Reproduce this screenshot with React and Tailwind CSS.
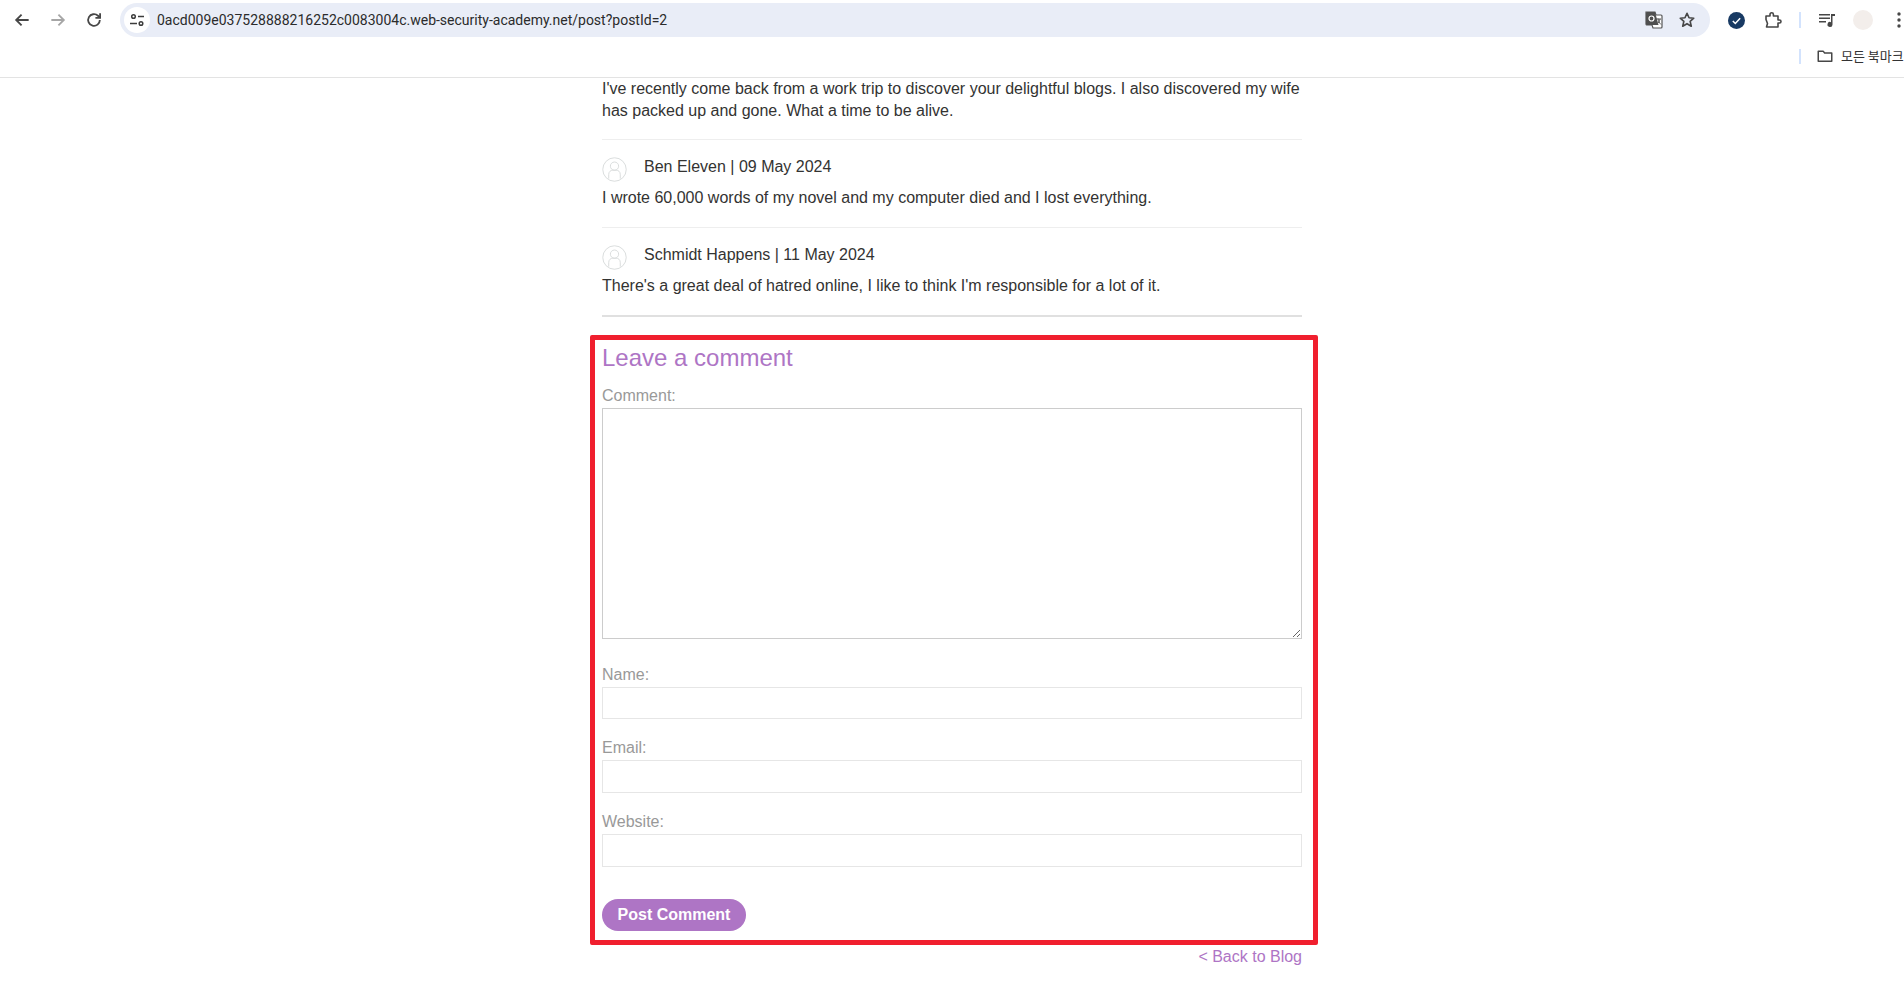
import React from "react";

function Avatar() {
  return (
    <svg width="25" height="25" viewBox="0 0 26 26" fill="none" stroke="#d9dcdc" strokeWidth="1" className="shrink-0">
      <circle cx="13" cy="13" r="12.200" />
      <circle cx="13" cy="9.500" r="4.300" />
      <path d="M7 22.500v-4.500c0-2.600 2-4.300 4.300-4.300h3.400c2.300 0 4.300 1.700 4.300 4.300v4.500" />
    </svg>
  );
}

function Comment({ author, children, last }) {
  return (
    <section className={`pt-[16px] pb-[18px] ${last ? "border-b-2 border-[#e0e0e0] -mb-[1px]" : "border-b border-[#eeeeee]"}`}>
      <div className="flex items-center h-[26px] gap-[17px]">
        <Avatar />
        <span className="-mt-[5px]">{author}</span>
      </div>
      <p className="mt-[5px] leading-[22px]">{children}</p>
    </section>
  );
}

function Field({ label, top, h }) {
  return (
    <div className={top}>
      <label className="block text-[#999999] leading-[22px] h-[22px]">{label}</label>
      <input className={`block mt-[1px] w-full ${h} border border-[#e6e6e6] bg-white outline-none`} />
    </div>
  );
}

export default function App() {
  return (
    <div className="h-[981px] overflow-hidden bg-white text-[16px] text-[#333332] font-['Liberation_Sans',Arial,sans-serif]">
      <header className="h-[78px] border-b border-[#e3e3e3] bg-white">
        <div className="flex items-center h-[40px]">
          <div className="w-[120px] shrink-0 flex items-center pl-[12px] gap-[16px]">
            <svg width="20" height="20" viewBox="0 0 24 24" fill="none" stroke="#474747" strokeWidth="2.200">
              <path d="M20 12H5M11.500 5.500 5 12l6.500 6.500" />
            </svg>
            <svg width="20" height="20" viewBox="0 0 24 24" fill="none" stroke="#a6a6a6" strokeWidth="2.200">
              <path d="M4 12h15M12.500 5.500 19 12l-6.500 6.500" />
            </svg>
            <svg width="20" height="20" viewBox="0 0 24 24" fill="none" stroke="#474747" strokeWidth="2.200">
              <path d="M19 12a7 7 0 1 1-2.200-5.100L19 9" />
              <path d="M19.300 3.800V9.400h-5.600" />
            </svg>
          </div>
          <div className="w-[1590px] h-[34px] rounded-full bg-[#e9edf7] flex items-center pl-[4px] pr-[14px]">
            <div className="w-[26px] h-[26px] rounded-full bg-white flex items-center justify-center shrink-0">
              <svg width="16" height="16" viewBox="0 0 16 16" fill="none" stroke="#3c3c3c" strokeWidth="1.500">
                <circle cx="4.500" cy="4.500" r="1.800" />
                <path d="M9 4.500h6M1 11.500h7" />
                <circle cx="12" cy="11.500" r="1.800" />
              </svg>
            </div>
            <span className="ml-[7px] text-[14px] text-[#2b2b2b] font-['Roboto',sans-serif]">
              0acd009e037528888216252c0083004c.web-security-academy.net/post?postId=2
            </span>
            <div className="ml-auto flex items-center gap-[14px]">
              <svg width="20" height="20" viewBox="0 0 20 20">
                <path d="M2 2h9l1 3h5a1 1 0 0 1 1 1v11a1 1 0 0 1-1 1H9l-1-3H3a1 1 0 0 1-1-1z" fill="#fff" stroke="#555" strokeWidth="1.200" />
                <path d="M2 3a1 1 0 0 1 1-1h8l3.500 13H3a1 1 0 0 1-1-1z" fill="#4f4f4f" />
                <circle cx="7.500" cy="8.500" r="2.500" fill="none" stroke="#fff" strokeWidth="1.200" />
                <path d="M12 9h5M14 8.500c.5 3 1.500 4.500 3 6M16 9c-.5 2.500-1.700 4-3 5" fill="none" stroke="#555" strokeWidth="1" />
              </svg>
              <svg width="18" height="18" viewBox="0 0 24 24" fill="none" stroke="#474747" strokeWidth="2.200" strokeLinejoin="round">
                <path d="m12 3 2.700 6 6.300.600-4.800 4.200 1.500 6.500L12 16.900l-5.700 3.400 1.500-6.500L3 9.600 9.300 9z" />
              </svg>
            </div>
          </div>
          <div className="flex-1 flex items-center pl-[18px]">
            <div className="w-[17px] h-[17px] rounded-full bg-[#183a63] flex items-center justify-center shrink-0">
              <svg width="11" height="11" viewBox="0 0 12 12" fill="none" stroke="#fff" strokeWidth="1.700">
                <path d="m2 6.500 2.700 2.700L10 3.500" />
              </svg>
            </div>
            <svg width="18" height="18" viewBox="0 0 18 18" fill="none" stroke="#474747" strokeWidth="1.600" className="ml-[19px] shrink-0">
              <path d="M2 5h4V3.500a1.700 1.700 0 0 1 3.400 0V5h4.600v4h1.500a1.500 1.500 0 0 1 0 3H14v4H2.500l1-3.500-1.500-4z" strokeLinejoin="round" />
            </svg>
            <div className="w-[2px] h-[16px] bg-[#d3e3fd] ml-[17px] shrink-0" />
            <svg width="18" height="18" viewBox="0 0 18 18" fill="#474747" className="ml-[17px] shrink-0">
              <path d="M1 3h11v1.500H1zM1 6.500h11V8H1zM1 10h7v1.500H1z" />
              <path d="M13 3h4v2h-2.500v8.500a2.500 2.500 0 1 1-1.500-2.300z" />
            </svg>
            <div className="w-[20px] h-[20px] rounded-full bg-[#f3eeeb] ml-[17px] shrink-0" />
            <svg width="4" height="16" viewBox="0 0 4 16" fill="#474747" className="ml-[24px] shrink-0">
              <circle cx="2" cy="2" r="1.700" />
              <circle cx="2" cy="8" r="1.700" />
              <circle cx="2" cy="14" r="1.700" />
            </svg>
          </div>
        </div>
        <div className="flex items-center justify-end h-[28px] mt-[2px] overflow-hidden">
          <div className="w-[2px] h-[15px] bg-[#d3e3fd] shrink-0" />
          <svg width="18" height="18" viewBox="0 0 24 24" fill="none" stroke="#474747" strokeWidth="2" className="ml-[15px] shrink-0">
            <path d="M3 5.500h6.500l2 2.500H21v11H3z" strokeLinejoin="round" />
          </svg>
          <span className="ml-[7px] w-[63px] shrink-0 whitespace-nowrap overflow-hidden text-[13px] font-['Noto_Sans_CJK_KR',sans-serif] text-[#333]">
            모든 북마크
          </span>
        </div>
      </header>

      <main className="w-[700px] mx-auto">
        <section className="pb-[17px] border-b border-[#eeeeee]">
          <p className="leading-[22px]">
            I've recently come back from a work trip to discover your delightful blogs. I also discovered my wife has packed up and gone. What a time to be alive.
          </p>
        </section>
        <Comment author="Ben Eleven | 09 May 2024">I wrote 60,000 words of my novel and my computer died and I lost everything.</Comment>
        <Comment author="Schmidt Happens | 11 May 2024" last>There's a great deal of hatred online, I like to think I'm responsible for a lot of it.</Comment>

        <section className="-ml-[12px] w-[728px] mt-[19px] border-[5px] border-[#f01f2e] rounded-[2px] pl-[7px] pr-[11px] h-[610px]">
          <h2 className="text-[24px] leading-[36px] text-[#ae75c5]">Leave a comment</h2>
          <label className="block mt-[9px] text-[#999999] leading-[22px] h-[22px]">Comment:</label>
          <textarea className="block mt-[1px] w-full h-[231px] border border-[#cccccc] bg-white outline-none resize-y" />
          <Field label="Name:" top="mt-[25px]" h="h-[32px]" />
          <Field label="Email:" top="mt-[18px]" h="h-[33px]" />
          <Field label="Website:" top="mt-[18px]" h="h-[33px]" />
          <button className="block mt-[32px] w-[144px] h-[32px] rounded-full bg-[#ae75c5] text-white font-bold">Post Comment</button>
        </section>

        <div className="mt-[1px] text-right leading-[22px] text-[#ae75c5]">
          <a href="#">&lt; Back to Blog</a>
        </div>
      </main>
    </div>
  );
}
